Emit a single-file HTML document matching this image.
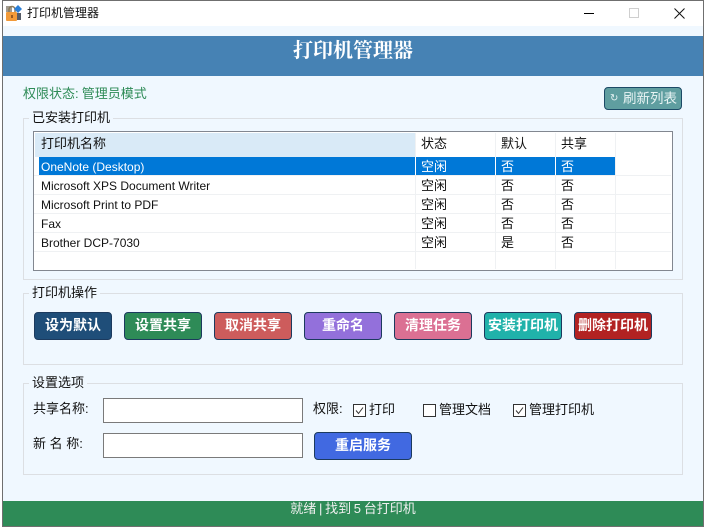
<!DOCTYPE html>
<html lang="zh"><head><meta charset="utf-8"><title>打印机管理器</title>
<style>
html,body{margin:0;padding:0;background:#fff;}
body{width:706px;height:529px;position:relative;overflow:hidden;font-family:"Liberation Sans","Noto Sans CJK SC",sans-serif;font-size:13px;color:#111;}
div,span{position:absolute;white-space:nowrap;box-sizing:border-box;}
.t{line-height:18px;height:18px;}
.grp{border:1px solid #dcdfe3;}
.leg{background:#f0f8ff;padding:0 3px;line-height:16px;height:16px;font-size:13px;}
.btn{top:312px;width:78px;height:28px;border:1px solid #1c3a5e;border-radius:4px;color:#fff;font-weight:bold;font-size:14px;line-height:25px;text-align:center;}
.sep{left:34px;width:637px;height:1px;background:#eff1f3;}
.vs{top:133px;width:1px;height:136px;background:#eff1f3;}
.c{font-size:13px;line-height:18px;height:18px;}
.n{left:41px;font-size:12px;line-height:18px;height:18px;}
.inp{left:103px;width:200px;height:25px;background:#fff;border:1px solid #7a7a7a;}
.cb{top:404px;width:13px;height:13px;background:#fff;border:1px solid #333;}
</style></head><body>
<div style="left:2px;top:0;width:702px;height:527px;background:#f0f8ff;border:1px solid #6f6f6f"></div>
<div style="left:3px;top:1px;width:700px;height:25px;background:#fff"></div>
<svg style="position:absolute;left:6px;top:5px" width="16" height="16" viewBox="0 0 16 16"><rect x="0" y="1" width="6" height="6" fill="#a09a90"/><path d="M3 8V4.5a3 3 0 0 1 6 0V8" fill="none" stroke="#8a7a5a" stroke-width="1.5"/><rect x="0" y="7" width="11" height="9" rx="1" fill="#f29a38"/><rect x="5" y="10" width="2" height="3" fill="#9a5a20"/><path d="M12 0l4 4-4 4-4-4z" fill="#2b7fd6"/><rect x="11" y="8" width="4" height="7" fill="#555b66"/></svg>
<div class="t" style="left:27px;top:4px;font-size:12px">打印机管理器</div>
<div style="left:584px;top:13px;width:10px;height:1px;background:#000"></div>
<div style="left:629px;top:8px;width:10px;height:10px;border:1px solid #cfcfcf"></div>
<svg style="position:absolute;left:674px;top:8px" width="11" height="11" viewBox="0 0 11 11"><path d="M.5.5l10 10M10.5.5l-10 10" stroke="#111" stroke-width="1" fill="none"/></svg>

<div style="left:3px;top:36px;width:700px;height:40px;background:#4682b4"></div>
<div style="left:3px;top:39px;width:700px;height:24px;text-align:center;color:#fff;font:bold 20px/24px 'Liberation Serif','Noto Serif CJK SC',serif">打印机管理器</div>
<div class="t" style="left:23px;top:85px;color:#2e8b57;font-size:13px;word-spacing:-.5px">权限状态: 管理员模式</div>
<div style="left:604px;top:87px;width:78px;height:23px;background:#5f9ea0;border:1px solid #1c4a66;border-radius:4px"></div>
<div style="left:610px;top:89px;line-height:20px;font-size:10px;color:#e8f4f4">↻</div>
<div style="left:623px;top:88px;line-height:21px;font-size:13.5px;color:#e8f4f4">刷新列表</div>

<div class="grp" style="left:23px;top:118px;width:660px;height:162px"></div>
<div class="leg" style="left:29px;top:110px">已安装打印机</div>
<div style="left:33px;top:131px;width:640px;height:140px;background:#fff;border:1px solid #828790"></div>
<div style="left:35px;top:133px;width:380px;height:24px;background:#d9eaf7"></div>
<div class="c" style="left:41px;top:135px;font-size:13px">打印机名称</div>
<div class="c" style="left:421px;top:135px">状态</div>
<div class="c" style="left:501px;top:135px">默认</div>
<div class="c" style="left:561px;top:135px">共享</div>
<div class="vs" style="left:415px"></div><div class="vs" style="left:495px"></div><div class="vs" style="left:555px"></div><div class="vs" style="left:615px"></div>
<div class="sep" style="top:175px"></div><div class="sep" style="top:194px"></div><div class="sep" style="top:213px"></div><div class="sep" style="top:232px"></div><div class="sep" style="top:251px"></div>
<div style="left:39px;top:157px;width:576px;height:18px;background:#0078d7"></div>
<div style="left:415px;top:157px;width:1px;height:18px;background:#fff"></div><div style="left:495px;top:157px;width:1px;height:18px;background:#fff"></div><div style="left:555px;top:157px;width:1px;height:18px;background:#fff"></div>
<div class="n" style="top:158px;color:#fff">OneNote (Desktop)</div><div class="c" style="left:421px;top:158px;color:#fff">空闲</div><div class="c" style="left:501px;top:158px;color:#fff">否</div><div class="c" style="left:561px;top:158px;color:#fff">否</div>
<div class="n" style="top:177px">Microsoft XPS Document Writer</div><div class="c" style="left:421px;top:177px">空闲</div><div class="c" style="left:501px;top:177px">否</div><div class="c" style="left:561px;top:177px">否</div>
<div class="n" style="top:196px">Microsoft Print to PDF</div><div class="c" style="left:421px;top:196px">空闲</div><div class="c" style="left:501px;top:196px">否</div><div class="c" style="left:561px;top:196px">否</div>
<div class="n" style="top:215px">Fax</div><div class="c" style="left:421px;top:215px">空闲</div><div class="c" style="left:501px;top:215px">否</div><div class="c" style="left:561px;top:215px">否</div>
<div class="n" style="top:234px">Brother DCP-7030</div><div class="c" style="left:421px;top:234px">空闲</div><div class="c" style="left:501px;top:234px">是</div><div class="c" style="left:561px;top:234px">否</div>

<div class="grp" style="left:23px;top:293px;width:660px;height:72px"></div>
<div class="leg" style="left:29px;top:285px">打印机操作</div>
<div class="btn" style="left:34px;background:#1f4e79">设为默认</div>
<div class="btn" style="left:124px;background:#2e8b57">设置共享</div>
<div class="btn" style="left:214px;background:#cd5c5c">取消共享</div>
<div class="btn" style="left:304px;background:#9370db">重命名</div>
<div class="btn" style="left:394px;background:#db7093">清理任务</div>
<div class="btn" style="left:484px;background:#20b2aa">安装打印机</div>
<div class="btn" style="left:574px;background:#b22222">删除打印机</div>

<div class="grp" style="left:23px;top:383px;width:660px;height:92px"></div>
<div class="leg" style="left:29px;top:375px">设置选项</div>
<div class="t" style="left:33px;top:400px">共享名称:</div>
<div class="inp" style="top:398px"></div>
<div class="t" style="left:313px;top:400px">权限:</div>
<div class="cb" style="left:353px"></div>
<svg style="position:absolute;left:353px;top:404px" width="13" height="13"><path d="M3 6.5l2.5 3L10 3.5" fill="none" stroke="#333"/></svg>
<div class="t" style="left:369px;top:401px">打印</div>
<div class="cb" style="left:423px"></div>
<div class="t" style="left:439px;top:401px">管理文档</div>
<div class="cb" style="left:513px"></div>
<svg style="position:absolute;left:513px;top:404px" width="13" height="13"><path d="M3 6.5l2.5 3L10 3.5" fill="none" stroke="#333"/></svg>
<div class="t" style="left:529px;top:401px">管理打印机</div>
<div class="t" style="left:33px;top:435px">新 名 称:</div>
<div class="inp" style="top:433px"></div>
<div class="btn" style="left:314px;top:432px;width:98px;height:28px;background:#4169e1">重启服务</div>

<div style="left:3px;top:501px;width:700px;height:25px;background:#2e8b57"></div>
<div style="left:3px;top:500px;width:700px;height:18px;line-height:18px;text-align:center;color:#f0f0f0;font-size:13px;word-spacing:-.9px">就绪 | 找到 5 台打印机</div>
</body></html>
